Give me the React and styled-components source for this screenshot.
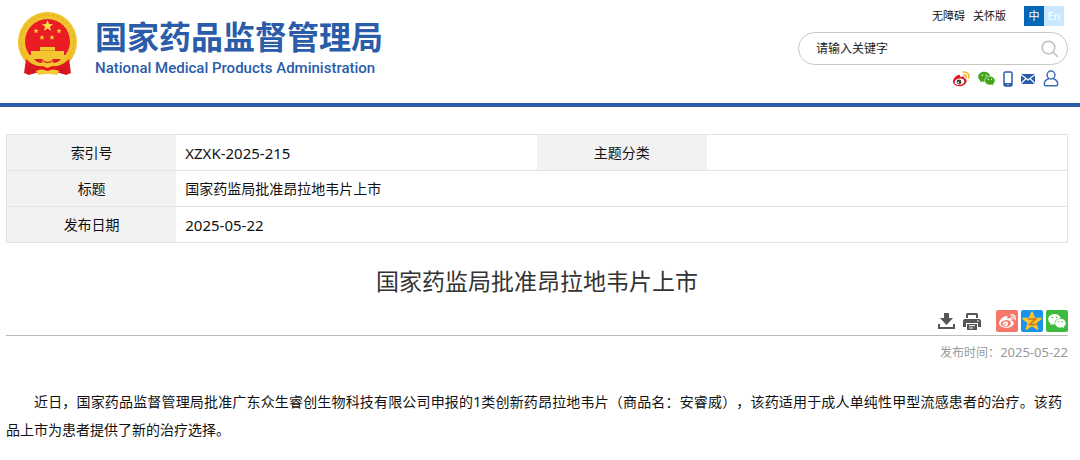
import styled, { createGlobalStyle } from "styled-components"
import { FaWeibo } from "react-icons/fa"
import { AiFillWechat } from "react-icons/ai"

const GlobalStyle = createGlobalStyle`
    * {
        box-sizing: border-box;
    }
    body {
        margin: 0;
        background-color: white;
        color: #111;
        font-family: "Noto Sans", "Noto Sans CJK SC", sans-serif;
        font-size: 14px;
        /* keep full-width punctuation at its full width */
        text-spacing-trim: space-all;
    }
`

const Header = styled.header`
    display: flex;
    justify-content: space-between;
    height: 107px;
    padding: 0 12px 0 16px;
    border-bottom: 4px solid #2a5caa;
`
const Brand = styled.a`
    display: flex;
    align-items: flex-start;
    gap: 17px;
    padding-top: 11px;
    color: #2a5caa;
    text-decoration: none;
`
const BrandText = styled.div`
    display: flex;
    flex-direction: column;
    gap: 4px;
    padding-top: 5px;
`
const BrandName = styled.span`
    font-family: "Noto Sans CJK SC", sans-serif;
    font-size: 32px;
    font-weight: 700;
    line-height: 38px;
`
const BrandSub = styled.span`
    font-family: Roboto, sans-serif;
    font-size: 15px;
    font-weight: 500;
    line-height: 20px;
`
const Tools = styled.div`
    display: flex;
    flex-direction: column;
    align-items: flex-end;
    width: 270px;
    padding-top: 6px;
`
const TopLinks = styled.nav`
    display: flex;
    align-items: center;
    gap: 8px;
    padding-right: 4px;
`
const TopLink = styled.a`
    color: #111;
    font-size: 11px;
    line-height: 18px;
    text-decoration: none;
`
const Langs = styled.div`
    display: flex;
    margin-left: 10px;
`
const LangButton = styled.button`
    width: 20px;
    height: 20px;
    padding: 0;
    border: none;
    background-color: ${({ $active }) => ($active ? "#0068b7" : "#c9e8ff")};
    color: white;
    font-family: inherit;
    font-size: 11px;
    line-height: 18px;
    cursor: pointer;
`
const SearchBox = styled.form`
    display: flex;
    align-items: center;
    width: 100%;
    height: 33px;
    margin-top: 6px;
    padding: 0 8px 0 17px;
    border: 1px solid #c8c8c8;
    border-radius: 17px;
`
const SearchInput = styled.input`
    flex: 1;
    min-width: 0;
    padding: 0;
    border: none;
    outline: none;
    background: none;
    font-family: inherit;
    font-size: 12px;

    &::placeholder {
        color: #222;
        opacity: 1;
    }
`
const IconButton = styled.button`
    display: flex;
    padding: 0;
    border: none;
    background: none;
    color: #555;
    cursor: pointer;
`
const Socials = styled.div`
    display: flex;
    align-items: center;
    gap: 7px;
    padding: 4px 9px 0 0;
`
const IconLink = styled.a`
    display: flex;
`

const Main = styled.main`
    padding: 27px 12px 0 6px;
`
const InfoTable = styled.table`
    width: 100%;
    table-layout: fixed;
    border-collapse: collapse;
    border: 1px solid #e4e4e4;
`
const InfoRow = styled.tr`
    height: 36px;
    border-bottom: 1px solid #e4e4e4;
`
const Label = styled.th`
    width: 16%;
    padding: 0;
    background-color: #f2f2f2;
    font-weight: 400;
    line-height: 20px;
`
const Value = styled.td`
    padding: 0 9px;
    font-size: ${({ $latin }) => ($latin ? "15px" : "14px")};
    line-height: 20px;
`
const Title = styled.h1`
    margin: 20px 0 0;
    color: #333;
    font-size: 23px;
    font-weight: 400;
    line-height: 36px;
    text-align: center;
`
const Actions = styled.div`
    display: flex;
    justify-content: flex-end;
    align-items: center;
    gap: 8px;
    margin-top: 11px;
    padding-bottom: 3px;
    border-bottom: 1px solid #bbb;
`
const Shares = styled.div`
    display: flex;
    gap: 3px;
    margin-left: 7px;
`
const ShareButton = styled.button`
    display: flex;
    justify-content: center;
    align-items: center;
    width: 22px;
    height: 22px;
    padding: 0;
    border: none;
    border-radius: 2px;
    background-color: ${({ $color }) => $color};
    color: white;
    cursor: pointer;
`
const PubDate = styled.p`
    margin: 6px 0 0;
    color: #999;
    font-size: 12px;
    line-height: 20px;
    text-align: right;
`
const DateText = styled.time`
    font-size: 13px;
`
const Content = styled.p`
    margin: 25px 0 0;
    padding-right: 6px;
    line-height: 28px;
    text-align: justify;
    text-indent: 2em;
`

const star = (cx, cy, r) => {
  const points = []
  for (let i = 0; i < 10; i++) {
    const len = i % 2 ? r * 0.42 : r
    const a = (Math.PI / 5) * i - Math.PI / 2
    points.push(`${cx + len * Math.cos(a)},${cy + len * Math.sin(a)}`)
  }
  return points.join(" ")
}

const Emblem = () => (
  <svg width="62" height="66" viewBox="0 0 62 66" aria-hidden="true">
    <ellipse cx="31.500" cy="31" rx="29.500" ry="30" fill="#f0c22c" />
    <ellipse cx="31.500" cy="31" rx="26.500" ry="27" fill="none" stroke="#e3ad22" strokeDasharray="3 2" />
    <circle cx="31.500" cy="30.500" r="22.500" fill="#ea1c24" />
    <polygon points={star(31.5, 15, 6)} fill="#fde04a" />
    <polygon points={star(20, 20, 2.8)} fill="#fcd23a" />
    <polygon points={star(43, 20, 2.8)} fill="#fcd23a" />
    <polygon points={star(26, 26.5, 2.8)} fill="#fcd23a" />
    <polygon points={star(36, 26.5, 2.8)} fill="#fcd23a" />
    {/* gate tower */}
    <path d="M24 36h15v4h9v4H15v-4h9z" fill="#f5c52e" />
    <path d="M24 39.500h15" stroke="#dd9a20" />
    {/* ribbon */}
    <path d="M10 48q9 10 21.500 6Q44 58 53 48l2 14-5 2-6-2H19l-6 2-5-2z" fill="#de1820" />
    <path d="M12 44h39q-3 7-12 10l-7.500 3-7.500-3q-9-3-12-10z" fill="#f3c631" />
    <path d="M18 48h9q-2 3-1 4-5 0-8-4zM45 48h-9q2 3 1 4 5 0 8-4z" fill="#e01a22" />
    <path d="M25 49q6.500 5 13 0" fill="none" stroke="#dc3a20" strokeWidth="1.300" />
    <path d="M20 60q5-3 11.500 0Q38 57 43 60l-2 4q-9-2-19 0z" fill="#f5ca34" />
    <path d="M13 56v7M17 58v5M46 58v5M50 56v7" stroke="#b5121a" />
  </svg>
)

const SearchIcon = () => (
  <svg width="18" height="18" viewBox="0 0 18 18" fill="none" stroke="#bdbdbd" strokeWidth="1.500">
    <circle cx="7.500" cy="7.500" r="6.300" />
    <path d="M12 12l5 5" />
  </svg>
)

const WeiboIcon = () => (
  <svg width="18" height="16" viewBox="0 0 18 16">
    <path d="M1 10.500C1 7.500 5.500 3.300 7.500 3.900c1 .3.800 1.500.5 2.100 1.800-.8 4.600-.9 4.300 1.300 1.700.5 2.300 1.300 2.300 2.600 0 3-4 5.300-7.300 5.300C3.500 15.200 1 13 1 10.500z" fill="#e3141c" />
    <ellipse cx="7.500" cy="10.700" rx="4.900" ry="3.200" fill="white" transform="rotate(-8 7.500 10.700)" />
    <circle cx="7" cy="11" r="2.400" fill="#444" />
    <circle cx="6.300" cy="11.600" r=".8" fill="white" />
    <path d="M11.500 1.200c3.600-.5 6 2 5.200 5.600M11.600 4c1.600-.2 2.700.8 2.400 2.400" fill="none" stroke="#f8b52a" strokeWidth="1.700" strokeLinecap="round" />
  </svg>
)

const PhoneIcon = () => (
  <svg width="10" height="16" viewBox="0 0 10 16">
    <rect x="1" y="1" width="8" height="14" rx="1.500" fill="white" stroke="#2a5caa" strokeWidth="1.500" />
    <path d="M1 12h8v2q0 1-1 1H2q-1 0-1-1z" fill="#2a5caa" />
    <circle cx="5" cy="13.300" r=".8" fill="white" />
  </svg>
)

const MailIcon = () => (
  <svg width="16" height="12" viewBox="0 0 16 12">
    <rect x="1" y="1" width="14" height="10" rx="1" fill="#2a5caa" />
    <path d="M1 1.500l7 5.500 7-5.500M1 10.500l5-5M15 10.500l-5-5" fill="none" stroke="white" strokeWidth="1.100" />
  </svg>
)

const UserIcon = () => (
  <svg width="16" height="17" viewBox="0 0 16 17" fill="none" stroke="#3f6cb5" strokeWidth="1.500">
    <circle cx="8" cy="5" r="3.900" />
    <path d="M5.800 8.700C3 9.500 1.300 11.700 1.300 14.200q0 1.500 1.500 1.500h10.400q1.500 0 1.500-1.500c0-2.500-1.700-4.700-4.500-5.500" />
  </svg>
)

const DownloadIcon = () => (
  <svg width="17" height="17" viewBox="0 0 17 17" fill="currentColor">
    <path d="M6 0h5v5h4l-6.500 7L2 5h4z" />
    <path d="M0 11h2v3h13v-3h2v5H0z" />
  </svg>
)

const PrintIcon = () => (
  <svg width="18" height="17" viewBox="0 0 18 17" fill="currentColor">
    <path d="M3 5V1.500Q3 0 4.500 0h9Q15 0 15 1.500V5h-2V2H5v3z" />
    <path d="M2 6h14q2 0 2 2v6h-3v-4H3v4H0V8q0-2 2-2z" />
    <path d="M4 11h10v6H4z" />
    <path d="M3.500 10.500h11" stroke="white" />
    <path d="M6 12.700h6M6 15h4" stroke="white" />
    <circle cx="15" cy="8" r=".8" fill="white" />
  </svg>
)

const QzoneIcon = () => (
  <svg width="20" height="20" viewBox="0 0 20 20">
    <polygon points={star(10, 10.5, 9.5)} fill="#fdc52b" stroke="#fdc52b" strokeWidth="1.500" strokeLinejoin="round" />
    <path d="M6.500 8h7l-6 5.500h7" fill="none" stroke="#c8741c" strokeWidth="1.500" />
  </svg>
)

const App = () => {
  return (
    <>
      <GlobalStyle />
      <Header>
        <Brand href="#">
          <Emblem />
          <BrandText>
            <BrandName>国家药品监督管理局</BrandName>
            <BrandSub>National Medical Products Administration</BrandSub>
          </BrandText>
        </Brand>
        <Tools>
          <TopLinks>
            <TopLink href="#">无障碍</TopLink>
            <TopLink href="#">关怀版</TopLink>
            <Langs>
              <LangButton type="button" $active>中</LangButton>
              <LangButton type="button">En</LangButton>
            </Langs>
          </TopLinks>
          <SearchBox onSubmit={(e) => e.preventDefault()}>
            <SearchInput type="text" aria-label="请输入关键字" placeholder="请输入关键字" />
            <IconButton aria-label="搜索"><SearchIcon /></IconButton>
          </SearchBox>
          <Socials>
            <IconLink href="#" aria-label="微博"><WeiboIcon /></IconLink>
            <IconLink href="#" aria-label="微信"><AiFillWechat size={19} color="#43a51b" /></IconLink>
            <IconLink href="#" aria-label="手机版"><PhoneIcon /></IconLink>
            <IconLink href="#" aria-label="邮箱"><MailIcon /></IconLink>
            <IconLink href="#" aria-label="用户"><UserIcon /></IconLink>
          </Socials>
        </Tools>
      </Header>
      <Main>
        <InfoTable>
          <colgroup>
            <col width="16%" />
            <col width="34%" />
            <col width="16%" />
            <col width="34%" />
          </colgroup>
          <tbody>
            <InfoRow>
              <Label scope="row">索引号</Label>
              <Value $latin>XZXK-2025-215</Value>
              <Label scope="row">主题分类</Label>
              <Value />
            </InfoRow>
            <InfoRow>
              <Label scope="row">标题</Label>
              <Value colSpan={3}>国家药监局批准昂拉地韦片上市</Value>
            </InfoRow>
            <InfoRow>
              <Label scope="row">发布日期</Label>
              <Value $latin colSpan={3}>2025-05-22</Value>
            </InfoRow>
          </tbody>
        </InfoTable>
        <Title>国家药监局批准昂拉地韦片上市</Title>
        <Actions>
          <IconButton type="button" aria-label="下载"><DownloadIcon /></IconButton>
          <IconButton type="button" aria-label="打印"><PrintIcon /></IconButton>
          <Shares>
            <ShareButton type="button" aria-label="分享到微博" $color="#f5776a"><FaWeibo size={17} /></ShareButton>
            <ShareButton type="button" aria-label="分享到QQ空间" $color="#1b93ea"><QzoneIcon /></ShareButton>
            <ShareButton type="button" aria-label="分享到微信" $color="#3dbb3d"><AiFillWechat size={20} /></ShareButton>
          </Shares>
        </Actions>
        <PubDate>发布时间：<DateText>2025-05-22</DateText></PubDate>
        <Content lang="zh-CN">
          近日，国家药品监督管理局批准广东众生睿创生物科技有限公司申报的1类创新药昂拉地韦片（商品名：安睿威），该药适用于成人单纯性甲型流感患者的治疗。该药品上市为患者提供了新的治疗选择。
        </Content>
      </Main>
    </>
  )
}

export default App
